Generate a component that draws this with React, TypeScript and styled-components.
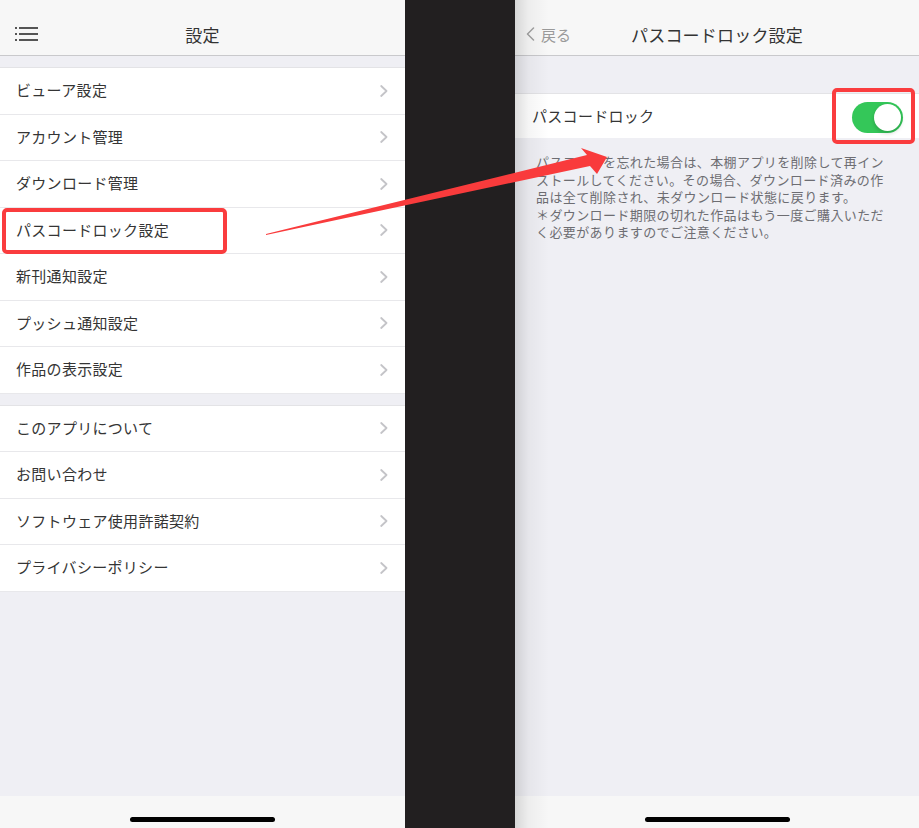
import React from 'react';
import styled, { createGlobalStyle } from 'styled-components';

const GlobalStyle = createGlobalStyle`
	html, body {
		margin: 0;
		padding: 0;
		background: #221f20;
	}
	body {
		font-family: "Noto Sans CJK JP", "Noto Sans", sans-serif;
		color: #333;
	}
`;

const firstGroup = ['ビューア設定', 'アカウント管理', 'ダウンロード管理', 'パスコードロック設定', '新刊通知設定', 'プッシュ通知設定', '作品の表示設定'];
const secondGroup = ['このアプリについて', 'お問い合わせ', 'ソフトウェア使用許諾契約', 'プライバシーポリシー'];

const noteLines = [
	'パスコードを忘れた場合は、本棚アプリを削除して再イン',
	'ストールしてください。その場合、ダウンロード済みの作',
	'品は全て削除され、未ダウンロード状態に戻ります。',
	'＊ダウンロード期限の切れた作品はもう一度ご購入いただ',
	'く必要がありますのでご注意ください。'
];

const Chevron = () => (
	<svg width="8" height="12" viewBox="0 0 8 12">
		<path d="M1.2 1 L6.5 6 L1.2 11" fill="none" stroke="#c4c4c8" strokeWidth="1.8" strokeLinecap="round" strokeLinejoin="round" />
	</svg>
);

const MenuIcon = () => (
	<svg width="24" height="16" viewBox="0 0 24 16">
		{[1, 7, 13].map(y => (
			<g key={y} fill="#555">
				<rect x="0" y={y} width="2" height="2" />
				<rect x="4" y={y} width="19" height="2" />
			</g>
		))}
	</svg>
);

const SettingRow: React.FC<{ label: string, marked?: boolean }> = ({ label, marked }) => (
	<Row>
		<Label>{label}</Label>
		<Chevron />
		{marked && <LeftMark />}
	</Row>
);

const App: React.FC = () => {
	return <Page>
		<GlobalStyle />
		<Screen>
			<NavBar>
				<NavLeft><MenuIcon /></NavLeft>
				<Title>設定</Title>
			</NavBar>
			<Body>
				<Group>
					{firstGroup.map(label => <SettingRow key={label} label={label} marked={label === 'パスコードロック設定'} />)}
				</Group>
				<Group>
					{secondGroup.map(label => <SettingRow key={label} label={label} />)}
				</Group>
			</Body>
			<HomeBar><Indicator /></HomeBar>
		</Screen>
		<Gutter />
		<Screen shaded>
			<NavBar>
				<NavLeft>
					<BackButton>
						<svg width="9" height="14" viewBox="0 0 9 14">
							<path d="M7.5 1 L1.5 7 L7.5 13" fill="none" stroke="#a0a0a0" strokeWidth="1.5" strokeLinecap="round" strokeLinejoin="round" />
						</svg>
						戻る
					</BackButton>
				</NavLeft>
				<Title>パスコードロック設定</Title>
			</NavBar>
			<Body top={37}>
				<Group>
					<ToggleRow>
						<Label>パスコードロック</Label>
						<Switch><Knob /></Switch>
						<RightMark />
					</ToggleRow>
				</Group>
				<Note>
					{noteLines.map(line => <div key={line}>{line}</div>)}
				</Note>
			</Body>
			<HomeBar><Indicator /></HomeBar>
		</Screen>
		<ArrowLayer width="919" height="828" viewBox="0 0 919 828">
			<polygon points="266,234 587,155 581,148 607,157 597,174 590,166 266,235" fill="#f93b3c" />
		</ArrowLayer>
	</Page>;
};

const Page = styled.div`
	position: relative;
	display: flex;
	width: 919px;
	height: 828px;
	overflow: hidden;
`;

const Screen = styled.div<{ shaded?: boolean }>`
	position: relative;
	display: flex;
	flex-direction: column;
	flex: ${props => props.shaded ? '1' : '0 0 405px'};
	background: #efeff4;

	&::before {
		content: '';
		display: ${props => props.shaded ? 'block' : 'none'};
		position: absolute;
		left: 0;
		top: 0;
		bottom: 0;
		width: 34px;
		background: linear-gradient(90deg, rgba(0,0,0,0.13), rgba(0,0,0,0.04) 40%, rgba(0,0,0,0));
		pointer-events: none;
		z-index: 5;
	}
`;

const Gutter = styled.div`
	flex: 0 0 110px;
	background: #221f20;
`;

const NavBar = styled.header`
	position: relative;
	display: flex;
	align-items: center;
	justify-content: center;
	height: 55px;
	background: #f7f7f7;
	border-bottom: 1px solid #c9c9cc;
`;

const NavLeft = styled.div`
	position: absolute;
	left: 15px;
	top: 0;
	bottom: 0;
	display: flex;
	align-items: center;
	padding-top: 13px;
	box-sizing: border-box;
`;

const Title = styled.h1`
	margin: 0;
	padding-top: 13px;
	font-size: 17px;
	font-weight: 400;
	color: #333;
	letter-spacing: 0.2px;
`;

const BackButton = styled.span`
	display: flex;
	align-items: center;
	gap: 6px;
	margin-left: -4px;
	font-size: 15px;
	color: #9a9a9a;
`;

const Body = styled.main<{ top?: number }>`
	flex: 1;
	display: flex;
	flex-direction: column;
	gap: 11px;
	padding-top: ${props => props.top ?? 11}px;
`;

const Group = styled.section`
	background: #fff;
	border-top: 1px solid #e3e3e6;
`;

const Row = styled.div`
	position: relative;
	display: flex;
	align-items: center;
	justify-content: space-between;
	height: 46.5px;
	box-sizing: border-box;
	padding: 0 17px 0 16px;
	border-bottom: 1px solid #e8e8eb;
`;

const ToggleRow = styled(Row)`
	height: 44px;
	padding: 0 16px 0 17px;
	border-bottom: none;
`;

const Label = styled.span`
	padding-bottom: 2px;
	font-size: 15px;
	letter-spacing: 0.3px;
	color: #353535;
`;

const LeftMark = styled.div`
	position: absolute;
	left: 2px;
	top: 0;
	width: 225px;
	height: 46px;
	box-sizing: border-box;
	border: 4px solid #fa3c3e;
	border-radius: 5px;
`;

const RightMark = styled.div`
	position: absolute;
	right: 4px;
	top: -6px;
	width: 83px;
	height: 56px;
	box-sizing: border-box;
	border: 4px solid #fa3c3e;
	border-radius: 5px;
`;

const Switch = styled.div`
	display: flex;
	align-items: center;
	justify-content: flex-end;
	width: 51px;
	height: 31px;
	padding: 2px;
	box-sizing: border-box;
	border-radius: 16px;
	background: #34c759;
	margin-top: 2px;
`;

const Knob = styled.div`
	width: 27px;
	height: 27px;
	border-radius: 50%;
	background: #fff;
	box-shadow: 0 2px 4px rgba(0,0,0,0.2);
`;

const Note = styled.div`
	padding: 4px 10px 0 21px;
	font-size: 13px;
	letter-spacing: 0.4px;
	line-height: 17.5px;
	color: #6d6d72;
`;

const HomeBar = styled.footer`
	display: flex;
	justify-content: center;
	height: 32px;
	background: #f7f7f7;
`;

const Indicator = styled.div`
	width: 145px;
	height: 5px;
	margin-top: 21px;
	border-radius: 3px;
	background: #000;
`;

const ArrowLayer = styled.svg`
	position: absolute;
	left: 0;
	top: 0;
	pointer-events: none;
	z-index: 10;
`;

export default App;
